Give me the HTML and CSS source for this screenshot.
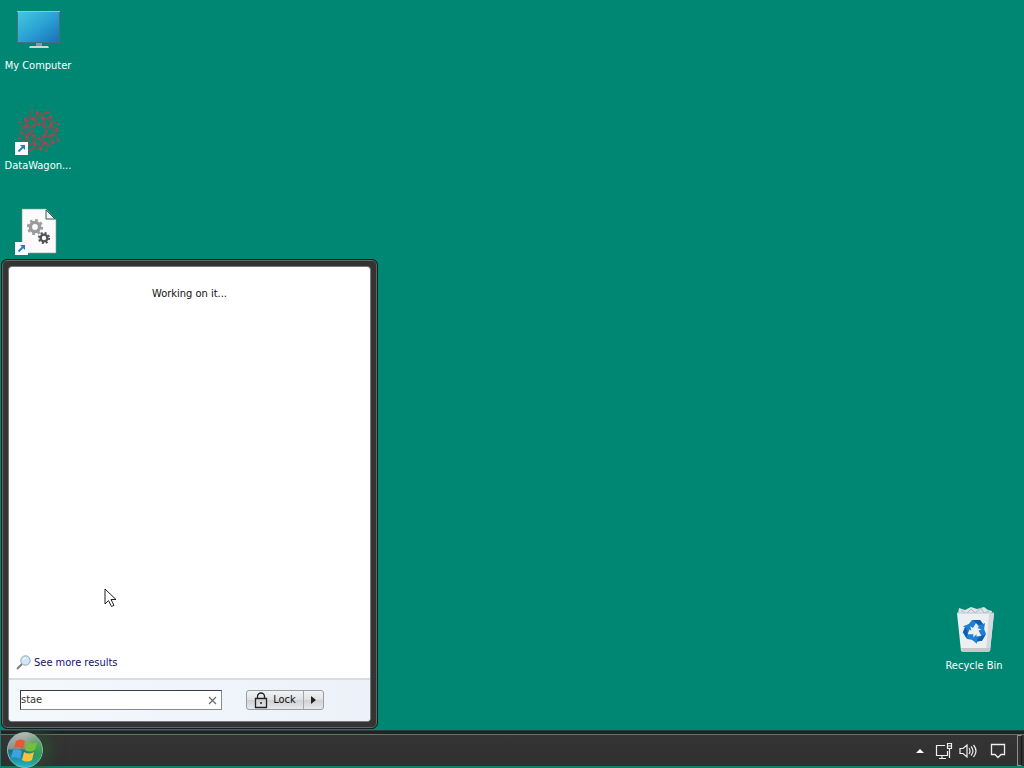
FILE: index.html
```html
<!DOCTYPE html>
<html lang="en">
<head>
<meta charset="utf-8">
<title>Desktop</title>
<link rel="stylesheet" href="styles.css">
</head>
<body>
<main class="desktop">
  <div class="icon-column">
    <a class="icon" href="#computer">
      <svg class="icon-art" viewBox="0 0 48 48" aria-hidden="true">
        <defs><linearGradient id="screen" x1="0" y1="0" x2="1" y2="1"><stop offset="0" stop-color="#43c8e0"/><stop offset=".5" stop-color="#2aa3d4"/><stop offset="1" stop-color="#1a70b8"/></linearGradient></defs>
        <rect x="3" y="5" width="43" height="32" rx="1" fill="#4a6d80"/>
        <rect x="3" y="5" width="43" height="1" fill="#a2bcc4"/>
        <rect x="4" y="6" width="41" height="30" fill="url(#screen)"/>
        <path d="M22 37h6v4h-6z" fill="#8799a0"/>
        <path d="M16 40h18l1 2H15z" fill="#cbd9da"/>
      </svg>
      <span>My Computer</span>
    </a>
    <a class="icon" href="#datawagon">
      <svg class="icon-art" viewBox="0 0 48 48" aria-hidden="true">
        <defs><g id="arm"><path d="M25 18q6-1 4-6t5-6M29 12q5 1 8-1M26 12l-3-5M25 18l-4-6 2-5M29 12l-3-6M31 16l-2-4" fill="none" stroke="#7d5450" stroke-width="1.3"/><circle cx="34" cy="6" r="1.2"/><circle cx="37" cy="11" r="1.3"/><circle cx="23" cy="7" r="1.2"/><circle cx="29" cy="12" r="1.6"/><circle cx="25" cy="18" r="1.500"/></g></defs>
        <g fill="#b3424b">
          <use href="#arm"/><use href="#arm" transform="rotate(45 25 25)"/><use href="#arm" transform="rotate(90 25 25)"/><use href="#arm" transform="rotate(135 25 25)"/><use href="#arm" transform="rotate(180 25 25)"/><use href="#arm" transform="rotate(225 25 25)"/><use href="#arm" transform="rotate(270 25 25)"/><use href="#arm" transform="rotate(315 25 25)"/>
        </g>
        <circle cx="25" cy="25" r="7" fill="none" stroke="#8d4d4d" stroke-width="1.3" stroke-dasharray="4 1"/>
        <g id="shortcut"><rect x="1" y="36" width="13" height="13" fill="#f8fbfd"/><path d="M4.500 45.500l5-5" fill="none" stroke="#267dba" stroke-width="1.800"/><path d="M6 39h5v5z" fill="#267dba"/></g>
      </svg>
      <span>DataWagon...</span>
    </a>
    <a class="icon" href="#settings-file" aria-label="Settings file">
      <svg class="icon-art" viewBox="0 0 48 48" aria-hidden="true">
        <path d="M8 3h24l10 11v33H8z" fill="#fafbfa" stroke="#8a9996" stroke-width=".6"/>
        <path d="M32 4v9h9z" fill="#eef4f2" stroke="#315d57"/>
        <g fill="none" stroke="#9a9c9c"><circle cx="21" cy="21" r="4.600" stroke-width="3.400"/><circle cx="21" cy="21" r="6.900" stroke-width="2.400" stroke-dasharray="2.700 2.720"/></g>
        <g fill="none" stroke="#515456"><circle cx="30" cy="32" r="3.400" stroke-width="2.400"/><circle cx="30" cy="32" r="5.100" stroke-width="2" stroke-dasharray="2 2.005"/></g>
        <use href="#shortcut"/>
      </svg>
    </a>
  </div>
  <a class="icon recycle" href="#recycle-bin">
    <svg class="icon-art" viewBox="0 0 48 48" aria-hidden="true">
      <path d="M8 8l1-6 6 2 6-3 6 2 7-2 4 3 4 1-1 5H9z" fill="#dce5e8"/>
      <path d="M11 4l5 4 5-5 4 4 6-5 3 5 5-2" fill="none" stroke="#a9b8c0"/>
      <path d="M7 7h37l-4 38-3 1H14l-3-1z" fill="#edf0f3"/>
      <path d="M39 7h5l-4 38-4 1z" fill="#d3d9dd"/><path d="M7 7h37" stroke="#bcc9cf"/>
      <path d="M11 42h29l-1 4H12z" fill="#c8c8cb"/>
      <defs><g id="turn"><path d="M18 19l4-5h8l3 4 2-1-1 7-7-2 2-1-3-4-3 5z" fill="#217fd1"/><path d="M23 14h7l3 4-3 1-4-2z" fill="#0d5fae"/></g></defs>
      <use href="#turn"/><use href="#turn" transform="rotate(120 25 25)"/><use href="#turn" transform="rotate(240 25 25)"/>
      <circle cx="25" cy="25" r="3" fill="#edf0f3"/>
    </svg>
    <span>Recycle Bin</span>
  </a>

  <section class="menu" aria-label="Start menu">
    <div class="panel">
      <div class="results">
        <p class="status">Working on it...</p>
        <a class="more" href="#results">
          <svg width="16" height="16" viewBox="0 0 16 16" aria-hidden="true"><path d="M1 14l5-5" stroke="#777f86" stroke-width="2"/><circle cx="9.500" cy="5.500" r="4.700" fill="#cfe7f7" stroke="#8ca2b2"/><path d="M7 5q1-2 3-2" fill="none" stroke="#fff"/></svg>
          <span>See more results</span>
        </a>
      </div>
      <form class="footer">
        <div class="search">
          <input type="text" value="stae" aria-label="Search programs and files">
          <button type="button" aria-label="Clear search"><svg width="9" height="9" viewBox="0 0 9 9"><path d="M1 1l7 7M8 1L1 8" stroke="#626b74" stroke-width="1.200"/></svg></button>
        </div>
        <div class="power">
          <button class="lock" type="button"><svg width="14" height="17" viewBox="0 0 14 17" aria-hidden="true"><path d="M1.500 6.500h11v9h-11zM3.500 6V4.500a3.500 3.500 0 0 1 7 0V6" fill="none" stroke="#222" stroke-width="1.300"/><circle cx="7" cy="11" r="1" fill="#222"/></svg>Lock</button>
          <button class="options" type="button" aria-label="Power options"><svg width="5" height="8" viewBox="0 0 5 8"><path d="M0 0l5 4-5 4z" fill="#222"/></svg></button>
        </div>
      </form>
    </div>
  </section>
  <svg class="pointer" width="13" height="20" viewBox="0 0 13 20" aria-hidden="true"><path d="M1 1v15l3.500-3.500 3 6 2.500-1.200-3-5.800h5z" fill="#fff" stroke="#222"/></svg>
</main>

<footer class="taskbar">
  <button class="start" type="button" aria-label="Start">
    <svg width="38" height="36" viewBox="0 0 38 36">
      <defs>
        <linearGradient id="orb" x1="0" y1="0" x2="0" y2="1"><stop offset="0" stop-color="#b4b8b5"/><stop offset=".45" stop-color="#8a9390"/><stop offset=".52" stop-color="#176b84"/><stop offset="1" stop-color="#20bdc6"/></linearGradient>
        <radialGradient id="lime" cx=".95" cy=".5" r=".6"><stop offset="0" stop-color="#39a64b"/><stop offset="1" stop-color="#39a64b" stop-opacity="0"/></radialGradient>
      </defs>
      <circle cx="19" cy="18" r="17.500" fill="url(#orb)" stroke="#8cbcb8"/>
      <circle cx="19" cy="18" r="17" fill="url(#lime)"/>
      <path d="M10 9q5-3 9 0l-2 8q-4-3-9-1z" fill="#e65a30"/>
      <path d="M21 10q5 3 10 0l-2 8q-6 3-10 0z" fill="#75bd3c"/>
      <path d="M7 18q5-2 9 1l-2 8q-4-3-9-1z" fill="#3ba4e0"/>
      <path d="M18 20q5 3 10 0l-2 8q-5 3-10 0z" fill="#fac13c"/>
    </svg>
  </button>
  <div class="tray">
    <button type="button" aria-label="Show hidden icons"><svg width="8" height="4" viewBox="0 0 8 4"><path d="M0 4l4-4 4 4z" fill="#fff"/></svg></button>
    <button type="button" aria-label="Network"><svg width="18" height="18" viewBox="0 0 18 18"><path d="M10 3.500H1.500v10h11V9M4 16.500h7M7 14v2M12.500 1.500h4v5h-4zM14.500 7v9" fill="none" stroke="#eee" stroke-width="1.200"/><path d="M13 4h3" stroke="#eee"/></svg></button>
    <button type="button" aria-label="Volume"><svg width="18" height="16" viewBox="0 0 18 16"><path d="M1 5.500h3l4-3.500v12l-4-3.500H1zM10 5q2 3 0 6M12 3.500q4 4.500 0 9M14.500 2q5 6 0 12" fill="none" stroke="#eee" stroke-width="1.200"/></svg></button>
    <button class="notices" type="button" aria-label="Notifications"><svg width="16" height="16" viewBox="0 0 16 16"><path d="M1.500 1.500h13v10H11L8 14.500l-3-3H1.500z" fill="none" stroke="#eee" stroke-width="1.300"/></svg></button>
    <button class="peek" type="button" aria-label="Show desktop"></button>
  </div>
</footer>
</body>
</html>
```
FILE: styles.css
```css
* { box-sizing: border-box; }

body {
  margin: 0;
  min-height: 100vh;
  display: flex;
  flex-direction: column;
  background: #008774;
  font: 11px/14px "DejaVu Sans Condensed", "Noto Sans", sans-serif;
  color: #111;
}

button, input { font: inherit; color: inherit; }
button { padding: 0; border: 0; background: none; }
svg { display: block; flex: none; }

.desktop {
  position: relative;
  flex: 1;
  display: flex;
  justify-content: space-between;
}

.icon {
  width: 76px;
  height: 100px;
  padding-top: 6px;
  display: flex;
  flex-direction: column;
  align-items: center;
  gap: 5px;
  color: #fff;
  text-decoration: none;
  white-space: nowrap;
}
.icon-art { width: 48px; height: 48px; overflow: visible; }
.recycle {
  align-self: flex-end;
  margin: 0 12px 30px 0;
}

.menu {
  position: absolute;
  left: 1px;
  bottom: 1px;
  width: 377px;
  height: 470px;
  padding: 6px;
  display: flex;
  border: 1px solid #111d1b;
  border-radius: 6px;
  background: #343434;
  box-shadow: inset 0 0 0 1px #626866;
}
.panel {
  flex: 1;
  display: flex;
  flex-direction: column;
  overflow: hidden;
  border: 1px solid #777b7d;
  border-radius: 4px;
  background: #fff;
}
.results {
  flex: 1;
  display: flex;
  flex-direction: column;
  justify-content: space-between;
  padding: 20px 7px 7px;
}
.status { margin: 0; text-align: center; }
.more {
  display: flex;
  align-items: center;
  align-self: flex-start;
  gap: 2px;
  color: #10106e;
  text-decoration: none;
}
.footer {
  display: flex;
  gap: 24px;
  padding: 10px 11px 11px;
  border-top: 2px solid #d5dde2;
  background: linear-gradient(to right, #f3f8fc, #edf2fa);
}
.search {
  width: 202px;
  height: 20px;
  display: flex;
  border: 1px solid #858b8e;
  border-top-color: #383e42;
  border-left-color: #383e42;
  background: #fff;
}
.search input {
  flex: 1;
  min-width: 0;
  padding: 0;
  border: 0;
  outline: 0;
  background: none;
  color: #333;
}
.search button { width: 18px; display: grid; place-items: center; }
.power {
  height: 20px;
  display: flex;
  border: 1px solid #989da1;
  border-radius: 3px;
  background: linear-gradient(#f2f3f5, #dfe1e3 48%, #cfd1d4 52%, #e6e8eb);
}
.lock {
  width: 56px;
  display: flex;
  align-items: center;
  justify-content: center;
  gap: 5px;
}
.options {
  width: 20px;
  display: grid;
  place-items: center;
  border-left: 1px solid #a3a6aa;
}
.pointer { position: absolute; left: 104px; top: 588px; }

.taskbar {
  height: 38px;
  display: flex;
  justify-content: space-between;
  padding: 1px 2px 0 5px;
  border-top: 1px solid #263f3b;
  border-bottom: 2px solid #18796e;
  border-left: 1px solid #18796e;
  background: linear-gradient(#202322 3px, #65736f 3px, #65736f 4px, #343434 4px, #303030);
}
.start { width: 38px; border-radius: 50%; box-shadow: 8px 0 14px #2b4b30; }
.tray { display: flex; align-items: stretch; gap: 6px; padding-top: 3px; }
.tray button { display: grid; place-items: center; min-width: 18px; }
.tray .notices { margin-left: 6px; }
.tray .peek {
  min-width: 5px;
  margin-left: 4px;
  border: 1px solid #8d9290;
  border-right-color: #151515;
  background: #333;
}
```
